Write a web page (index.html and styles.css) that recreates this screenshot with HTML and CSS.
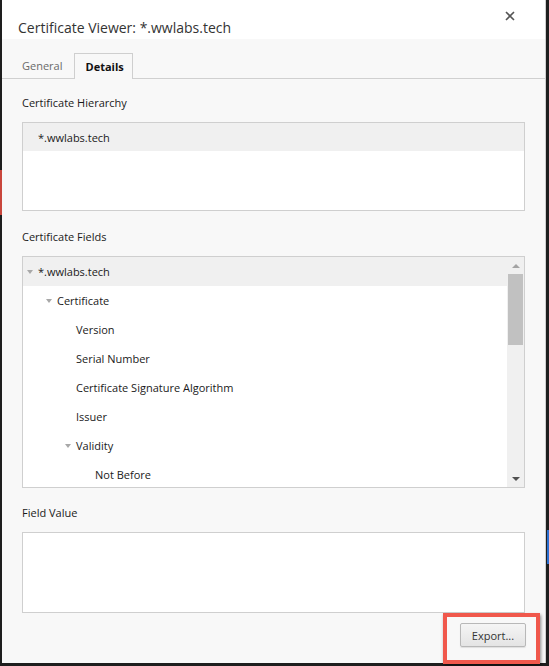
FILE: index.html
```html
<!DOCTYPE html>
<html>
<head>
<meta charset="utf-8">
<link rel="stylesheet" href="styles.css">
</head>
<body>
<div class="backdrop">
  <div class="left-mark"></div>
  <div class="right-mark"></div>
  <div class="dialog">
    <div class="header">
      <div class="title">Certificate Viewer: *.wwlabs.tech</div>
      <svg class="close" width="10" height="10" viewBox="0 0 10 10"><path d="M1 1L9 9M9 1L1 9" stroke="#555" stroke-width="1.6"/></svg>
    </div>
    <div class="tabs">
      <div class="tab">General</div>
      <div class="tab active">Details</div>
    </div>
    <div class="content">
      <div class="label first">Certificate Hierarchy</div>
      <div class="box hierarchy">
        <div class="row selected">*.wwlabs.tech</div>
      </div>
      <div class="label">Certificate Fields</div>
      <div class="box fields">
        <div class="rows">
          <div class="row selected"><span class="tri"></span>*.wwlabs.tech</div>
          <div class="row"><span class="pad1"></span><span class="tri"></span>Certificate</div>
          <div class="row"><span class="pad3"></span>Version</div>
          <div class="row"><span class="pad3"></span>Serial Number</div>
          <div class="row"><span class="pad3"></span>Certificate Signature Algorithm</div>
          <div class="row"><span class="pad3"></span>Issuer</div>
          <div class="row"><span class="pad2"></span><span class="tri"></span>Validity</div>
          <div class="row"><span class="pad4"></span>Not Before</div>
        </div>
        <div class="scrollbar">
          <div class="arrow up"></div>
          <div class="track"><div class="thumb"></div></div>
          <div class="arrow down"></div>
        </div>
      </div>
      <div class="label last">Field Value</div>
      <div class="box value"></div>
      <div class="actions">
        <div class="highlight"><button class="btn">Export...</button></div>
      </div>
    </div>
  </div>
</div>
</body>
</html>
```
FILE: styles.css
```css
html, body {
  margin: 0;
  padding: 0;
  background: #1e1e1e;
  width: 549px;
  height: 666px;
  overflow: hidden;
  font-family: "Open Sans", "Noto Sans", sans-serif;
  font-size: 11px;
  color: #1a1a1a;
}
.backdrop {
  position: relative;
  width: 549px;
  height: 666px;
}
.left-mark {
  position: absolute;
  left: 0;
  top: 170px;
  width: 2px;
  height: 45px;
  background: #c9463c;
}
.right-mark {
  position: absolute;
  right: 0;
  top: 530px;
  width: 2px;
  height: 34px;
  background: #2a6fd0;
}
.dialog {
  position: absolute;
  left: 2px;
  top: 0;
  width: 543px;
  height: 663px;
  border-right: 1px solid #cfcfcf;
  background: #f8f8f8;
  display: flex;
  flex-direction: column;
}
.header {
  background: #fff;
  height: 39px;
  flex: none;
  display: flex;
  align-items: flex-start;
  justify-content: space-between;
  padding: 0 30px 0 16px;
}
.title {
  font-size: 14px;
  color: #333;
  margin-top: 18px;
  line-height: 20px;
}
.close {
  margin-top: 11px;
}
.tabs {
  height: 40px;
  flex: none;
  box-sizing: border-box;
  border-bottom: 1px solid #d0d0d0;
  display: flex;
  align-items: flex-end;
  padding-left: 9px;
}
.tab {
  height: 25px;
  line-height: 26px;
  padding: 0 12px 0 11px;
  color: #6a6a6a;
}
.tab.active {
  box-sizing: border-box;
  border: 1px solid #cfcfcf;
  border-bottom: none;
  background: #f8f8f8;
  color: #111;
  font-weight: bold;
  margin-bottom: -1px;
  height: 26px;
  padding: 0 8px 0 10px;
}
.content {
  padding: 0 20px 0 20px;
  display: flex;
  flex-direction: column;
  flex: 1;
}
.label {
  margin-top: 16px;
  height: 19px;
  line-height: 19px;
}
.label.first {
  margin-top: 14px;
}
.label.last {
  margin-top: 15px;
}
.box {
  margin-top: 10px;
  background: #fff;
  border: 1px solid #cfcfcf;
  box-sizing: border-box;
  flex: none;
}
.hierarchy {
  height: 89px;
}
.row {
  height: 29px;
  line-height: 29px;
  display: flex;
  align-items: center;
  white-space: nowrap;
}
.row.selected {
  background: #f0f0f0;
}
.hierarchy .row {
  padding-left: 15px;
  height: 28px;
}
.fields {
  height: 232px;
  display: flex;
  overflow: hidden;
}
.rows {
  flex: 1;
}
.fields .row {
  padding-left: 4px;
}
.tri {
  width: 0;
  height: 0;
  border-left: 3px solid transparent;
  border-right: 3px solid transparent;
  border-top: 4px solid #a8a8a8;
  margin-right: 5px;
  flex: none;
}
.pad1 { width: 19px; flex: none; }
.pad2 { width: 38px; flex: none; }
.pad3 { width: 49px; flex: none; }
.pad4 { width: 68px; flex: none; }
.scrollbar {
  width: 17px;
  background: #f0f0f0;
  display: flex;
  flex-direction: column;
}
.arrow {
  height: 17px;
  display: flex;
  align-items: center;
  justify-content: center;
}
.arrow.up::after {
  content: "";
  border-left: 4px solid transparent;
  border-right: 4px solid transparent;
  border-bottom: 4px solid #a3a3a3;
}
.arrow.down::after {
  content: "";
  border-left: 4px solid transparent;
  border-right: 4px solid transparent;
  border-top: 4px solid #505050;
}
.track {
  flex: 1;
  padding: 0 1px;
}
.thumb {
  height: 71px;
  background: #c1c1c1;
}
.value {
  height: 81px;
}
.actions {
  display: flex;
  justify-content: flex-end;
  margin-right: -15px;
}
.highlight {
  margin-top: 0;
  border: 4px solid #f0584c;
  box-shadow: 1px 2px 3px rgba(0,0,0,0.45);
  padding: 6px 10px 13px 13px;
  display: flex;
}
.btn {
  font-family: "Open Sans", "Noto Sans", sans-serif;
  font-size: 11px;
  color: #333;
  height: 24px;
  width: 66px;
  padding: 0;
  border: 1px solid #b8b8b8;
  border-radius: 2px;
  background: linear-gradient(#f5f5f5, #e4e4e4);
  box-shadow: 0 1px 1px rgba(0,0,0,0.1);
}
```
